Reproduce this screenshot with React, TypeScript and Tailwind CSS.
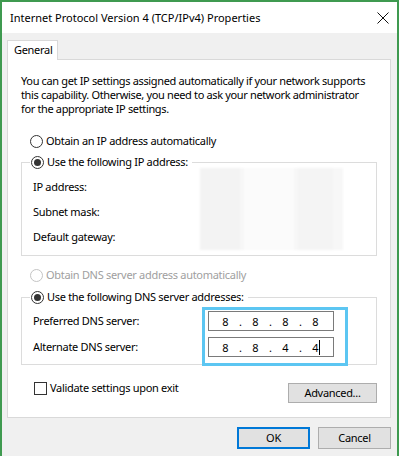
import React from "react";

const font = { fontFamily: '"Noto Sans", "Open Sans", sans-serif' };

function Radio({ checked, disabled }: { checked?: boolean; disabled?: boolean }) {
  return (
    <span
      className={
        "flex h-[13px] w-[13px] shrink-0 items-center justify-center rounded-full border bg-white " +
        (disabled ? "border-[#c4c4c4]" : "border-[#333333]")
      }
    >
      {checked ? <span className="h-[7px] w-[7px] rounded-full bg-[#333333]" /> : null}
    </span>
  );
}

function RadioRow({ label, checked, disabled }: { label: string; checked?: boolean; disabled?: boolean }) {
  return (
    <div className="flex h-[16px] items-center gap-[3px]">
      <Radio checked={checked} disabled={disabled} />
      <span className={disabled ? "text-[#a0a0a0]" : "text-black"}>{label}</span>
    </div>
  );
}

function IpField({ parts, caret }: { parts: string[]; caret?: boolean }) {
  const items: string[] = [];
  parts.forEach((p, i) => {
    items.push(p);
    if (i < parts.length - 1) items.push(".");
  });
  return (
    <div className="flex h-[20px] w-[126px] items-center border border-[#7a7a7a] bg-white pl-[9px] tracking-normal">
      {items.map((t, i) => (
        <span key={i} className="relative w-[15px] text-center leading-none">
          {t}
          {caret && i === items.length - 1 ? (
            <span className="absolute right-[3px] top-[-2px] h-[15px] w-px bg-black" />
          ) : null}
        </span>
      ))}
    </div>
  );
}

function LabelRow({ label, children }: { label: string; children?: React.ReactNode }) {
  return (
    <div className="flex h-[20px] items-center">
      <span className="w-[175px] shrink-0">{label}</span>
      {children}
    </div>
  );
}

export default function App() {
  return (
    <div
      className="flex h-[456px] w-[399px] flex-col overflow-hidden border-x-2 border-t-2 border-[#3f9a50] bg-[#f0f0f0] text-[11px] tracking-[-0.3px] text-black"
      style={font}
    >
      {/* Title bar */}
      <div className="flex h-[31px] shrink-0 items-center justify-between bg-white pl-[8px] pr-[8px]">
        <span className="text-[11px] leading-none tracking-normal">Internet Protocol Version 4 (TCP/IPv4) Properties</span>
        <svg width="12" height="12" viewBox="0 0 12 12" className="mt-[1px]">
          <path d="M0.5 0.5 L11.5 11.5 M11.5 0.5 L0.5 11.5" stroke="#111" strokeWidth="1" />
        </svg>
      </div>

      {/* Body */}
      <div className="flex flex-1 flex-col pl-[5px] pr-[6px] pt-[7px]">
        <div className="relative z-10 -mb-px flex h-[20px] w-[51px] items-center border-x border-t border-[#d9d9d9] bg-white pl-[6px]">
          General
        </div>
        <div className="flex h-[359px] flex-col border border-[#d9d9d9] bg-white px-[13px] pb-[14px] pt-[14px]">
          <p className="whitespace-nowrap leading-[14px] tracking-[-0.35px]">
            You can get IP settings assigned automatically if your network supports
            <br />
            this capability. Otherwise, you need to ask your network administrator
            <br />
            for the appropriate IP settings.
          </p>

          <div className="mt-[17px] pl-[9px]">
            <RadioRow label="Obtain an IP address automatically" />
          </div>

          <fieldset className="mt-[5px] border border-[#dcdcdc] px-0 pb-[8px]">
            <legend className="ml-[8px] pr-[4px] pl-px">
              <RadioRow label="Use the following IP address:" checked />
            </legend>
            <div className="relative flex flex-col gap-[5px] pl-[11px] pt-[7px]">
              <LabelRow label="IP address:" />
              <LabelRow label="Subnet mask:" />
              <LabelRow label="Default gateway:" />
              <div className="absolute left-[178px] top-[-2px] flex h-[82px] w-[143px] gap-[4px] bg-[#f7f7f7] blur-[1px]">
                <div className="h-full w-[40px] bg-[#f3f3f3]" />
                <div className="h-full w-[50px] bg-[#fbfbfb]" />
                <div className="h-full w-[35px] bg-[#f4f4f4]" />
              </div>
            </div>
          </fieldset>

          <div className="mt-[11px] pl-[9px]">
            <RadioRow label="Obtain DNS server address automatically" disabled />
          </div>

          <fieldset className="mt-[6px] border border-[#dcdcdc] px-0 pb-[7px]">
            <legend className="ml-[8px] pr-[4px] pl-px">
              <RadioRow label="Use the following DNS server addresses:" checked />
            </legend>
            <div className="relative flex flex-col gap-[6px] pl-[11px] pt-[6px]">
              <LabelRow label="Preferred DNS server:">
                <IpField parts={["8", "8", "8", "8"]} />
              </LabelRow>
              <LabelRow label="Alternate DNS server:">
                <IpField parts={["8", "8", "4", "4"]} caret />
              </LabelRow>
              <div className="pointer-events-none absolute left-[180px] top-[2px] h-[59px] w-[146px] border-[3px] border-[#5cc6f2]" />
            </div>
          </fieldset>

          <div className="mt-[15px] flex items-start justify-between">
            <div className="ml-[13px] flex h-[16px] items-center gap-[3px]">
              <span className="h-[13px] w-[13px] border border-[#333333] bg-white" />
              <span>Validate settings upon exit</span>
            </div>
            <button className="mt-[3px] flex h-[20px] w-[89px] items-center justify-center border border-[#adadad] bg-[#e1e1e1]">
              Advanced...
            </button>
          </div>
        </div>

        <div className="mt-[9px] flex justify-end gap-[8px]">
          <button className="flex h-[22px] w-[73px] items-center justify-center border-2 border-[#0078d7] bg-[#e1e1e1]">
            OK
          </button>
          <button className="flex h-[22px] w-[73px] items-center justify-center border border-[#adadad] bg-[#e1e1e1]">
            Cancel
          </button>
        </div>
      </div>
    </div>
  );
}
